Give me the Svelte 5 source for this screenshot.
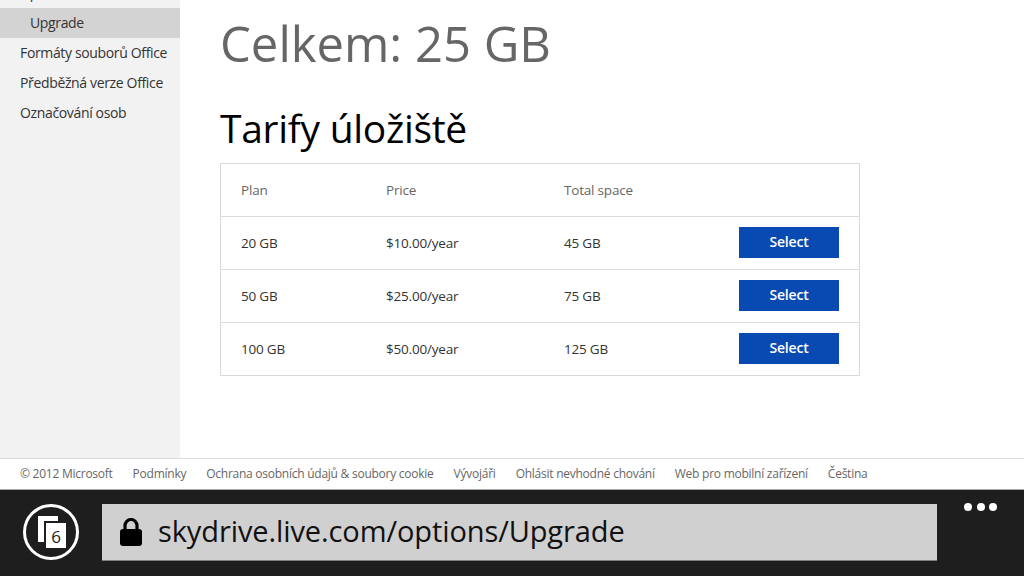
<script>
  const rows = [
    { plan: '20 GB', price: '$10.00/year', total: '45 GB' },
    { plan: '50 GB', price: '$25.00/year', total: '75 GB' },
    { plan: '100 GB', price: '$50.00/year', total: '125 GB' }
  ];
  const links = ['© 2012 Microsoft', 'Podmínky', 'Ochrana osobních údajů & soubory cookie', 'Vývojáři', 'Ohlásit nevhodné chování', 'Web pro mobilní zařízení', 'Čeština'];
</script>

<div class="page">
  <div class="upper">
    <aside class="side">
      <div class="item first">Úprava</div>
      <div class="item sel">Upgrade</div>
      <div class="item">Formáty souborů Office</div>
      <div class="item">Předběžná verze Office</div>
      <div class="item">Označování osob</div>
    </aside>
    <main class="main">
      <h1>Celkem: 25 GB</h1>
      <h2>Tarify úložiště</h2>
      <div class="table">
        <div class="row head">
          <div class="c1">Plan</div><div class="c2">Price</div><div class="c3">Total space</div>
        </div>
        {#each rows as r}
          <div class="row">
            <div class="c1">{r.plan}</div><div class="c2">{r.price}</div><div class="c3">{r.total}</div>
            <button class="sel-btn">Select</button>
          </div>
        {/each}
      </div>
    </main>
  </div>
  <footer class="foot">
    {#each links as l}<span>{l}</span>{/each}
  </footer>
  <div class="bar">
    <svg class="tabs" width="58" height="58" viewBox="0 0 58 58">
      <circle cx="29" cy="29" r="26.5" fill="none" stroke="#fff" stroke-width="3"/>
      <rect x="16" y="13" width="20" height="26" fill="#fff"/>
      <rect x="22" y="18" width="24" height="29" fill="#1e1e1e"/>
      <rect x="24" y="20" width="20" height="25" fill="#fff"/>
      <text x="34" y="40" text-anchor="middle" class="six">6</text>
    </svg>
    <div class="addr">
      <svg class="lock" width="22" height="28" viewBox="0 0 22 28">
        <path d="M5 13V7.500a6 6 0 0 1 12 0V13" fill="none" stroke="#000" stroke-width="3.200"/>
        <rect x="0" y="11" width="22" height="17" rx="3" fill="#000"/>
      </svg>
      <span class="url">skydrive.live.com/options/Upgrade</span>
    </div>
    <div class="dots"><i></i><i></i><i></i></div>
  </div>
</div>

<style>
  :global(body) { margin: 0; }
  .page { width: 1024px; height: 576px; display: flex; flex-direction: column; overflow: hidden; font-family: "Open Sans", sans-serif; background: #fff; }
  .upper { height: 458px; display: flex; flex: none; }
  .side { width: 180px; background: #f2f2f2; font-size: 14px; color: #333; flex: none; overflow: hidden; }
  .item { height: 30px; line-height: 30px; padding-left: 20px; white-space: nowrap; letter-spacing: -0.35px; }
  .item.first { margin-top: -22px; }
  .item.sel { padding-left: 30px; background: #d3d3d3; }
  .main { flex: 1; padding-left: 40px; }
  h1 { margin: 12px 0 0; font-size: 49px; line-height: 62px; font-weight: 400; color: #666; }
  h2 { margin: 29px 0 0; font-size: 39px; line-height: 50px; font-weight: 400; color: #000; letter-spacing: -0.3px; }
  .table { width: 638px; margin-top: 10px; border: 1px solid #d9d9d9; }
  .row { height: 53px; display: flex; align-items: center; border-top: 1px solid #dcdcdc; font-size: 13.500px; color: #333; letter-spacing: -0.2px; }
  .row + .row { height: 52px; }
  .row.head { border-top: none; height: 52px; color: #666; }
  .c1 { width: 145px; padding-left: 20px; }
  .c2 { width: 178px; }
  .c3 { width: 175px; }
  .sel-btn { width: 100px; height: 31px; margin-bottom: 2px; background: #094ab2; color: #fff; border: none; padding: 0 0 2px; font: 600 14px "Open Sans", sans-serif; letter-spacing: -0.2px; }
  .foot { height: 32px; flex: none; box-sizing: border-box; border-top: 1px solid #dcdcdc; border-bottom: 1px solid #a8a8a8; display: flex; gap: 20px; padding: 0 0 2px 20px; align-items: center; font-size: 12px; color: #666; white-space: nowrap; letter-spacing: -0.25px; }
  .bar { flex: 1; background: #1e1e1e; display: flex; position: relative; }
  .tabs { display: block; margin: 13px 0 0 22px; flex: none; }
  .six { font: 400 17px "Open Sans", sans-serif; fill: #222; }
  .addr { width: 835px; height: 57px; margin: 14px 0 0 22px; box-sizing: border-box; background: #d0d0d0; border-bottom: 1px solid #808080; display: flex; align-items: center; padding-left: 18px; gap: 16px; font-size: 29px; letter-spacing: -0.1px; color: #111; white-space: nowrap; flex: none; }
  .url { margin-bottom: 3px; }
  .lock { flex: none; }
  .dots { position: absolute; left: 964px; top: 13px; display: flex; gap: 4.500px; }
  .dots i { width: 8px; height: 8px; border-radius: 50%; background: #fff; display: block; }
</style>
